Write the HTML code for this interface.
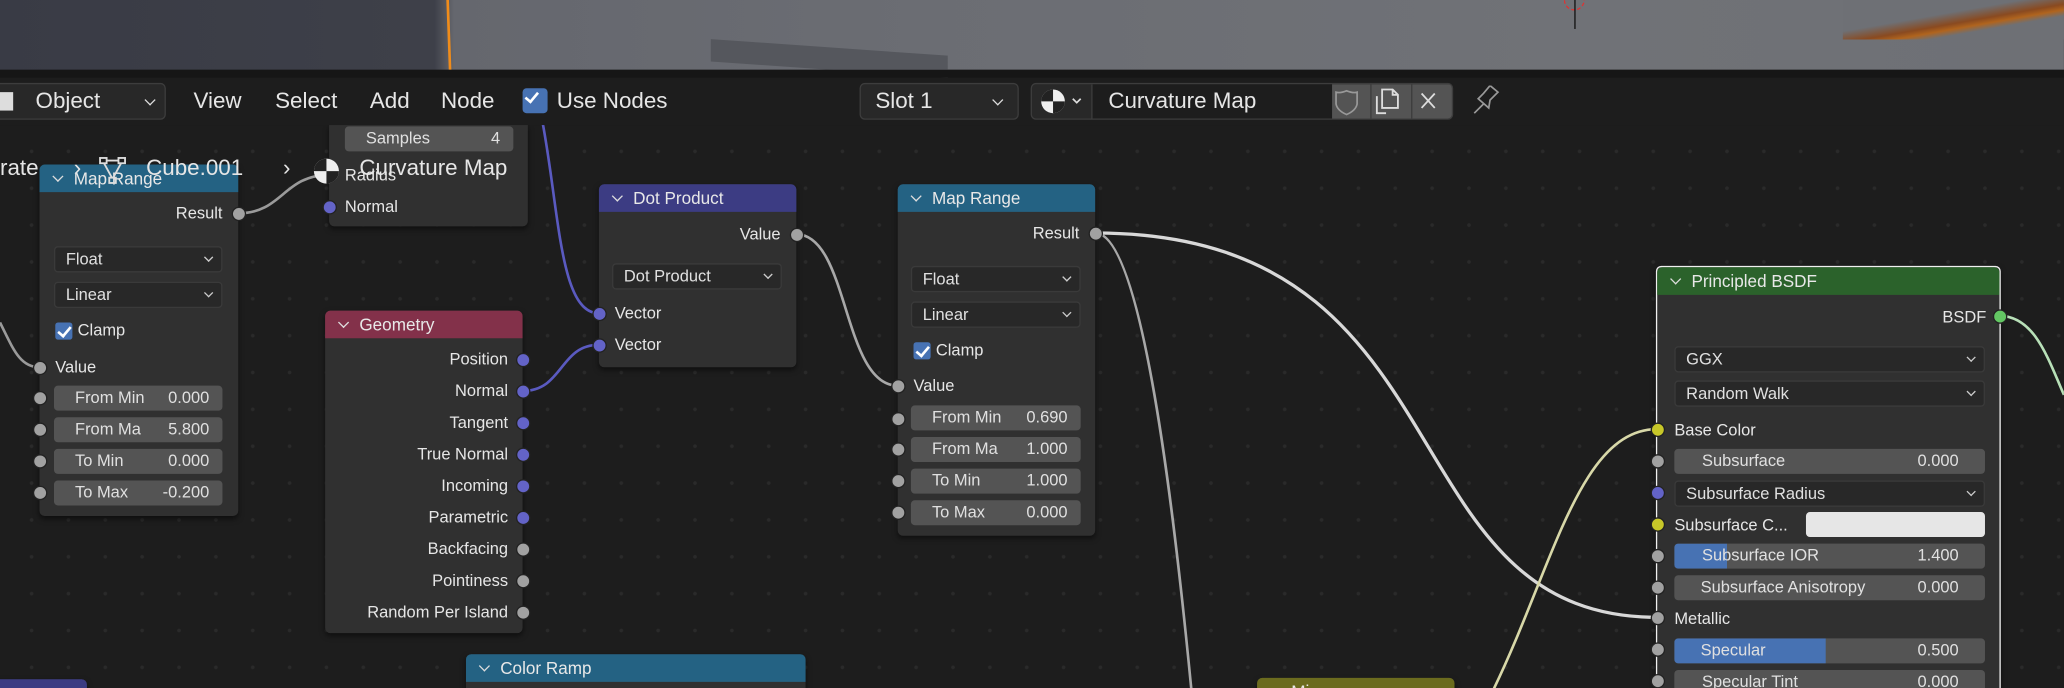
<!DOCTYPE html>
<html><head><meta charset="utf-8"><style>
*{box-sizing:border-box;margin:0;padding:0}
body{width:2064px;height:688px;overflow:hidden;background:#1d1d1d;font-family:"Liberation Sans","DejaVu Sans",sans-serif}
#w{position:absolute;left:0;top:0;width:1568px;height:523px;transform:scale(1.3163);transform-origin:0 0;overflow:hidden;background:#1d1d1d;color:#e6e6e6;font-size:13px}
.grid{position:absolute;left:0;top:95px;width:1568px;height:430px;background-image:radial-gradient(circle,#2a2a2a 1.2px,transparent 1.6px);background-size:28px 28px;background-position:10px 6px}
.a{position:absolute}
.node{position:absolute;background:#303030;border-radius:4px;box-shadow:0 2px 4px rgba(0,0,0,.5)}
.hd{position:absolute;left:0;right:0;top:0;height:21px;border-radius:4px 4px 0 0;padding-left:26px;line-height:21px;font-size:13px;color:#e8e8e8}
.hd:before{content:"";position:absolute;left:11px;top:6px;width:5px;height:5px;border-right:1.3px solid #ddd;border-bottom:1.3px solid #ddd;transform:rotate(45deg)}
.lbl{position:absolute;font-size:12.5px;line-height:16px;white-space:nowrap}
.r{text-align:right}
.fld{position:absolute;height:19px;background:#545454;border-radius:3px;font-size:12.5px;line-height:19px;color:#e0e0e0;overflow:hidden}
.fld .v{position:absolute;right:10px;top:0}
.fld .n{position:absolute;left:16px;top:0}
.dd{position:absolute;height:20px;background:#282828;border-radius:3px;border:1px solid #3a3a3a;font-size:12.5px;line-height:18px;padding-left:8px;color:#e0e0e0}
.dd:after{content:"";position:absolute;right:7px;top:5px;width:4px;height:4px;border-right:1.2px solid #ccc;border-bottom:1.2px solid #ccc;transform:rotate(45deg)}
.s{position:absolute;width:11px;height:11px;border-radius:50%;background:#a1a1a1;border:1px solid #222;margin:-5.5px 0 0 -5.5px}
.b{background:#6363c7}.y{background:#c7c729}.g{background:#63c763}
.cb{position:absolute;width:13px;height:13px;background:#4772b3;border-radius:2px}
.cb:after{content:"";position:absolute;left:4px;top:1px;width:4px;height:8px;border-right:2px solid #fff;border-bottom:2px solid #fff;transform:rotate(40deg)}
.hb{position:absolute;font-size:17px;line-height:28px;color:#e6e6e6}
</style></head><body><div id="w">
<div class="a" style="left:0;top:0;width:1568px;height:53px;background:linear-gradient(90deg,#393b45 0,#3e4049 330px,#65676e 345px,#6b6d73 700px,#707277 1200px,#6e7075 1568px)"></div>
<div class="a" style="left:340px;top:0;width:2px;height:53px;background:#f08c1a;transform:skewX(2deg)"></div>
<div class="a" style="left:540px;top:36px;width:180px;height:17px;background:#55575d;transform:skewY(4deg)"></div>
<div class="a" style="left:1400px;top:0;width:168px;height:30px;background:linear-gradient(170deg,#6e7075 40%,#8a4a20 55%,#b0641e 62%,#6e7075 70%)"></div>
<div class="a" style="left:1188px;top:-8px;width:16px;height:16px;border:1px dashed #d33;border-radius:50%"></div>
<div class="a" style="left:1196px;top:0;width:1px;height:22px;background:#111"></div>
<div class="a" style="left:0;top:53px;width:1568px;height:6px;background:#161616"></div>
<div class="grid"></div>
<svg class="a" style="left:0;top:0" width="1568" height="523" fill="none">
<path d="M181 162 C215 162 215 133 250 133" stroke="#9a9a9a" stroke-width="2"/>
<path d="M0 245 C10 265 15 279 30 279" stroke="#9a9a9a" stroke-width="2"/>
<path d="M412 92 C425 160 425 238 455 238" stroke="#5a5ac0" stroke-width="2"/>
<path d="M397 297 C428 297 425 262 455 262" stroke="#5a5ac0" stroke-width="2"/>
<path d="M605 178 C645 178 640 293 682 293" stroke="#a8a8a8" stroke-width="2"/>
<path d="M832 177 C1120 177 1050 469 1259 469" stroke="#d8d8d8" stroke-width="2.5"/>
<path d="M832 177 C870 177 895 420 905 523" stroke="#a8a8a8" stroke-width="2"/>
<path d="M1135 523 C1180 430 1200 326 1259 326" stroke="#d8d8a8" stroke-width="2"/>
<path d="M1519 240 C1545 240 1555 270 1568 300" stroke="#b8e0b8" stroke-width="2"/>
</svg>
<!-- Samples node -->
<div class="node" style="left:250px;top:95px;width:151px;height:77px;border-radius:0 0 4px 4px">
 <div class="fld" style="left:12px;top:1px;width:128px"><span class="n" style="left:16px">Samples</span><span class="v">4</span></div>
 <div class="lbl" style="left:12px;top:30px">Radius</div>
 <div class="lbl" style="left:12px;top:54px">Normal</div>
</div>
<div class="s b" style="left:250px;top:157px"></div>
<div class="s" style="left:250px;top:133px"></div>
<!-- header -->
<div class="a" style="left:0;top:59px;width:1568px;height:36px;background:#1d1d1d"></div>
<div class="a" style="left:-4px;top:63px;width:130px;height:28px;border:1px solid #3d3d3d;border-radius:4px;background:#282828"></div>
<div class="a" style="left:0;top:70px;width:10px;height:14px;background:#ddd"></div>
<div class="hb" style="left:27px;top:63px">Object</div>
<div class="a" style="left:111px;top:73px;width:6px;height:6px;border-right:1.3px solid #ddd;border-bottom:1.3px solid #ddd;transform:rotate(45deg)"></div>
<div class="hb" style="left:147px;top:63px">View</div>
<div class="hb" style="left:209px;top:63px">Select</div>
<div class="hb" style="left:281px;top:63px">Add</div>
<div class="hb" style="left:335px;top:63px">Node</div>
<div class="cb" style="left:397px;top:67px;width:19px;height:19px;border-radius:3px"></div>
<div class="hb" style="left:423px;top:63px">Use Nodes</div>
<div class="a" style="left:653px;top:63px;width:121px;height:28px;border:1px solid #3d3d3d;border-radius:4px;background:#282828"></div>
<div class="hb" style="left:665px;top:63px">Slot 1</div>
<div class="a" style="left:755px;top:73px;width:6px;height:6px;border-right:1.3px solid #ddd;border-bottom:1.3px solid #ddd;transform:rotate(45deg)"></div>
<div class="a" style="left:783px;top:63px;width:321px;height:28px;border:1px solid #3d3d3d;border-radius:4px;background:#282828;overflow:hidden">
 <div class="a" style="left:45px;top:0;width:183px;height:28px;background:#1d1d1d;border-left:1px solid #3d3d3d"></div>
 <div class="a" style="left:228px;top:0;width:92px;height:28px;background:#545454"></div>
 <div class="a" style="left:257px;top:0;width:1px;height:28px;background:#3d3d3d"></div>
 <div class="a" style="left:288px;top:0;width:1px;height:28px;background:#3d3d3d"></div>
</div>
<svg class="a" style="left:787px;top:65px" width="370" height="26" fill="none">
<circle cx="13" cy="12" r="9" fill="#eee"/><path d="M13 3 A9 9 0 0 0 4 12 L13 12Z M13 12 L22 12 A9 9 0 0 1 13 21Z" fill="#222"/>
<path d="M28 10 l3 3 l3 -3" stroke="#ddd" stroke-width="1.3"/>
<path d="M236 4 Q231 6 228 5 L228 14 Q229 19 236 22 Q243 19 244 14 L244 5 Q241 6 236 4Z" stroke="#999" stroke-width="1.3"/>
<path d="M259 8 L259 21 L266 21 M263 17 L263 3 L271 3 L275 7 L275 17Z M271 3 L271 7 L275 7" stroke="#ddd" stroke-width="1.4"/>
<path d="M293 6 L303 17 M303 6 L293 17" stroke="#ddd" stroke-width="1.4"/>
<path d="M333 21 L340 14 M336 10 L344 17 L345 11 L351 5 L345 0 L340 6 Z" stroke="#999" stroke-width="1.3"/>
</svg>
<div class="hb" style="left:842px;top:63px">Curvature Map</div>
<!-- Map range left -->
<div class="node" style="left:30px;top:125px;width:151px;height:267px">
 <div class="hd" style="background:#246283">Map Range</div>
 <div class="lbl r" style="right:12px;top:29px">Result</div>
 <div class="dd" style="left:11px;top:62px;width:128px">Float</div>
 <div class="dd" style="left:11px;top:89px;width:128px">Linear</div>
 <div class="cb" style="left:12px;top:120px"></div><div class="lbl" style="left:29px;top:118px">Clamp</div>
 <div class="lbl" style="left:12px;top:146px">Value</div>
 <div class="fld" style="left:11px;top:168px;width:128px"><span class="n">From Min</span><span class="v">0.000</span></div>
 <div class="fld" style="left:11px;top:192px;width:128px"><span class="n">From Ma</span><span class="v">5.800</span></div>
 <div class="fld" style="left:11px;top:216px;width:128px"><span class="n">To Min</span><span class="v">0.000</span></div>
 <div class="fld" style="left:11px;top:240px;width:128px"><span class="n">To Max</span><span class="v">-0.200</span></div>
</div>
<div class="s" style="left:181px;top:162px"></div><div class="s" style="left:30px;top:279px"></div>
<div class="s" style="left:30px;top:302px"></div><div class="s" style="left:30px;top:326px"></div><div class="s" style="left:30px;top:350px"></div><div class="s" style="left:30px;top:374px"></div>
<!-- breadcrumb -->
<div class="a" style="left:0;top:118px;font-size:17px;color:#e6e6e6;white-space:nowrap">rate</div>
<div class="a" style="left:56px;top:118px;font-size:17px">›</div>
<svg class="a" style="left:75px;top:119px" width="22" height="22" fill="none" stroke="#ddd" stroke-width="1.4"><rect x="1" y="1" width="5" height="4"/><rect x="15" y="1" width="5" height="4"/><rect x="8" y="16" width="5" height="4"/><path d="M6 3 L15 3 M4 5 L10 16 M17 5 L11 16"/></svg>
<div class="a" style="left:111px;top:118px;font-size:17px">Cube.001</div>
<div class="a" style="left:215px;top:118px;font-size:17px">›</div>
<svg class="a" style="left:237px;top:119px" width="22" height="22"><circle cx="11" cy="11" r="9.5" fill="#eee"/><path d="M11 1.5 A9.5 9.5 0 0 0 1.5 11 L11 11Z M11 11 L20.5 11 A9.5 9.5 0 0 1 11 20.5Z" fill="#222"/></svg>
<div class="a" style="left:273px;top:118px;font-size:17px">Curvature Map</div>
<!-- Dot product -->
<div class="node" style="left:455px;top:140px;width:150px;height:139px">
 <div class="hd" style="background:#3c3c83">Dot Product</div>
 <div class="lbl r" style="right:12px;top:30px">Value</div>
 <div class="dd" style="left:10px;top:60px;width:129px">Dot Product</div>
 <div class="lbl" style="left:12px;top:90px">Vector</div>
 <div class="lbl" style="left:12px;top:114px">Vector</div>
</div>
<div class="s" style="left:605px;top:178px"></div><div class="s b" style="left:455px;top:238px"></div><div class="s b" style="left:455px;top:262px"></div>
<!-- Geometry -->
<div class="node" style="left:247px;top:236px;width:150px;height:245px">
 <div class="hd" style="background:#83314a">Geometry</div>
 <div class="lbl r" style="right:11px;top:29px">Position</div>
 <div class="lbl r" style="right:11px;top:53px">Normal</div>
 <div class="lbl r" style="right:11px;top:77px">Tangent</div>
 <div class="lbl r" style="right:11px;top:101px">True Normal</div>
 <div class="lbl r" style="right:11px;top:125px">Incoming</div>
 <div class="lbl r" style="right:11px;top:149px">Parametric</div>
 <div class="lbl r" style="right:11px;top:173px">Backfacing</div>
 <div class="lbl r" style="right:11px;top:197px">Pointiness</div>
 <div class="lbl r" style="right:11px;top:221px">Random Per Island</div>
</div>
<div class="s b" style="left:397px;top:273px"></div><div class="s b" style="left:397px;top:297px"></div><div class="s b" style="left:397px;top:321px"></div><div class="s b" style="left:397px;top:345px"></div><div class="s b" style="left:397px;top:369px"></div><div class="s b" style="left:397px;top:393px"></div>
<div class="s" style="left:397px;top:417px"></div><div class="s" style="left:397px;top:441px"></div><div class="s" style="left:397px;top:465px"></div>
<!-- Map range 2 -->
<div class="node" style="left:682px;top:140px;width:150px;height:267px">
 <div class="hd" style="background:#246283">Map Range</div>
 <div class="lbl r" style="right:12px;top:29px">Result</div>
 <div class="dd" style="left:10px;top:62px;width:129px">Float</div>
 <div class="dd" style="left:10px;top:89px;width:129px">Linear</div>
 <div class="cb" style="left:12px;top:120px"></div><div class="lbl" style="left:29px;top:118px">Clamp</div>
 <div class="lbl" style="left:12px;top:145px">Value</div>
 <div class="fld" style="left:10px;top:168px;width:129px"><span class="n">From Min</span><span class="v">0.690</span></div>
 <div class="fld" style="left:10px;top:192px;width:129px"><span class="n">From Ma</span><span class="v">1.000</span></div>
 <div class="fld" style="left:10px;top:216px;width:129px"><span class="n">To Min</span><span class="v">1.000</span></div>
 <div class="fld" style="left:10px;top:240px;width:129px"><span class="n">To Max</span><span class="v">0.000</span></div>
</div>
<div class="s" style="left:832px;top:177px"></div><div class="s" style="left:682px;top:293px"></div>
<div class="s" style="left:682px;top:318px"></div><div class="s" style="left:682px;top:341px"></div><div class="s" style="left:682px;top:365px"></div><div class="s" style="left:682px;top:389px"></div>
<!-- Principled -->
<div class="node" style="left:1258px;top:202px;width:262px;height:340px;border:1px solid #f0f0f0">
 <div class="hd" style="background:#2b622b;top:0;height:21px">Principled BSDF</div>
 <div class="lbl r" style="right:10px;top:30px">BSDF</div>
 <div class="dd" style="left:13px;top:60px;width:236px">GGX</div>
 <div class="dd" style="left:13px;top:86px;width:236px">Random Walk</div>
 <div class="lbl" style="left:13px;top:116px">Base Color</div>
 <div class="fld" style="left:13px;top:138px;width:236px"><span class="n" style="left:21px">Subsurface</span><span class="v" style="right:20px">0.000</span></div>
 <div class="dd" style="left:13px;top:162px;width:236px">Subsurface Radius</div>
 <div class="lbl" style="left:13px;top:188px">Subsurface C...</div>
 <div class="a" style="left:113px;top:186px;width:136px;height:19px;background:#e6e6e6;border-radius:3px"></div>
 <div class="fld" style="left:13px;top:210px;width:236px"><div class="a" style="left:0;top:0;width:40px;height:19px;background:#4772b3"></div><span class="n" style="left:21px">Subsurface IOR</span><span class="v" style="right:20px">1.400</span></div>
 <div class="fld" style="left:13px;top:234px;width:236px"><span class="n" style="left:20px">Subsurface Anisotropy</span><span class="v" style="right:20px">0.000</span></div>
 <div class="lbl" style="left:13px;top:259px">Metallic</div>
 <div class="fld" style="left:13px;top:282px;width:236px"><div class="a" style="left:0;top:0;width:115px;height:19px;background:#4772b3"></div><span class="n" style="left:20px">Specular</span><span class="v" style="right:20px">0.500</span></div>
 <div class="fld" style="left:13px;top:306px;width:236px"><span class="n" style="left:21px">Specular Tint</span><span class="v" style="right:20px">0.000</span></div>
</div>
<div class="s g" style="left:1519px;top:240px"></div>
<div class="s y" style="left:1259px;top:326px"></div><div class="s" style="left:1259px;top:350px"></div><div class="s b" style="left:1259px;top:374px"></div><div class="s y" style="left:1259px;top:398px"></div>
<div class="s" style="left:1259px;top:422px"></div><div class="s" style="left:1259px;top:446px"></div><div class="s" style="left:1259px;top:469px"></div><div class="s" style="left:1259px;top:493px"></div><div class="s" style="left:1259px;top:517px"></div>
<!-- bottom nodes -->
<div class="node" style="left:354px;top:497px;width:258px;height:40px"><div class="hd" style="background:#246283">Color Ramp</div></div>
<div class="node" style="left:-10px;top:516px;width:76px;height:20px"><div class="hd" style="background:#3c3c83;padding-left:0"></div></div>
<div class="node" style="left:955px;top:515px;width:150px;height:20px"><div class="hd" style="background:#6b6b1e">Mi</div></div>
</div></body></html>
